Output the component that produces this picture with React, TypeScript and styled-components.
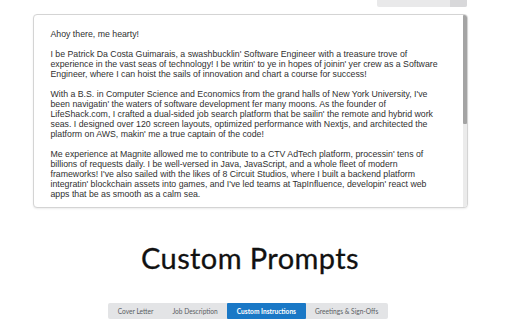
import styled, { createGlobalStyle } from "styled-components";
import { Clipboard } from "lucide-react";
import { useEffect, useRef, useState } from "react";

const GlobalStyle = createGlobalStyle`
    html, body {
        margin: 0;
        padding: 0;
        background: #ffffff;
        overflow: hidden;
    }
    body {
        font-family: "Liberation Sans", Arial, sans-serif;
    }
`;

const Page = styled.div`
    width: 500px;
    display: flex;
    flex-direction: column;
    align-items: center;
    margin-top: -16px;
`;

const ButtonRow = styled.div`
    width: 435px;
    display: flex;
    justify-content: flex-end;
`;

const CopyButton = styled.button`
    display: flex;
    align-items: stretch;
    height: 23px;
    padding: 0;
    border: none;
    border-radius: 0 0 2px 2px;
    overflow: hidden;
    background: #e9e9ea;
    margin-right: 1px;
    cursor: pointer;
`;

const CopyLabel = styled.span`
    display: flex;
    align-items: center;
    width: 73px;
    justify-content: center;
    font-family: "Liberation Sans", Arial, sans-serif;
    font-size: 7px;
    color: #555;
`;

const CopyIcon = styled.span`
    display: flex;
    align-items: center;
    justify-content: center;
    width: 17px;
    background: #d8d8da;
    color: #555;
`;

const LetterBox = styled.div`
    position: relative;
    box-sizing: border-box;
    width: 435px;
    height: 194px;
    margin-top: 7px;
    border: 1px solid #d4d4d4;
    border-radius: 4px;
    box-shadow: 0 1px 2px rgba(0, 0, 0, 0.08);
    background: #fff;
    overflow: hidden;
`;

const Letter = styled.textarea`
    display: block;
    box-sizing: border-box;
    width: 100%;
    height: 100%;
    margin: 0;
    padding: 14px 28px 15px 17px;
    border: none;
    font-family: "Liberation Sans", Arial, sans-serif;
    font-size: 8.75px;
    line-height: 10px;
    color: #303030;
    background: transparent;
    resize: none;
    outline: none;
    overflow-y: scroll;
    scrollbar-width: none;
`;

const Track = styled.div`
    position: absolute;
    top: 0;
    right: 0;
    bottom: 0;
    width: 4px;
    background: #ebebeb;
`;

const Thumb = styled.div`
    position: absolute;
    left: 0;
    width: 4px;
    background: #a4a4a4;
    border-radius: 1px;
`;

const Title = styled.h1`
    margin: 33px 0 0;
    font-family: Lato, "Noto Sans", sans-serif;
    font-weight: 400;
    font-size: 29px;
    line-height: 34px;
    color: #111;
    letter-spacing: 0.4px;
    -webkit-text-stroke: 0.3px #111;
`;

const Tabs = styled.div`
    display: flex;
    margin-top: 28px;
    background: #e3e4e6;
    border-radius: 2px;
    margin-left: -4px;
`;

const Tab = styled.button<{ $active?: boolean }>`
    height: 16px;
    padding: 0 9.5px;
    border: none;
    border-radius: 1px;
    font-family: Lato, "Noto Sans", sans-serif;
    font-size: 6.6px;
    font-weight: ${(p) => (p.$active ? 700 : 400)};
    color: ${(p) => (p.$active ? "#ffffff" : "#5a5e63")};
    background: ${(p) => (p.$active ? "#1a78c6" : "transparent")};
    cursor: pointer;
`;

const letter = `Ahoy there, me hearty!

I be Patrick Da Costa Guimarais, a swashbucklin' Software Engineer with a treasure trove of experience in the vast seas of technology! I be writin' to ye in hopes of joinin' yer crew as a Software Engineer, where I can hoist the sails of innovation and chart a course for success!

With a B.S. in Computer Science and Economics from the grand halls of New York University, I've been navigatin' the waters of software development fer many moons. As the founder of LifeShack.com, I crafted a dual-sided job search platform that be sailin' the remote and hybrid work seas. I designed over 120 screen layouts, optimized performance with Nextjs, and architected the platform on AWS, makin' me a true captain of the code!

Me experience at Magnite allowed me to contribute to a CTV AdTech platform, processin' tens of billions of requests daily. I be well-versed in Java, JavaScript, and a whole fleet of modern frameworks! I've also sailed with the likes of 8 Circuit Studios, where I built a backend platform integratin' blockchain assets into games, and I've led teams at TapInfluence, developin' react web apps that be as smooth as a calm sea.

I be a hearty team player, always ready to lend a hand on deck, and I never shy away from a stormy challenge. Whether it be squashin' bugs or plottin' new features, I bring the same spirit of adventure to every voyage.

Me mates say I be a quick learner with a keen eye fer detail, and I take pride in writin' clean, well-tested code that stands firm against the fiercest of tempests. I be comfortable workin' across the whole ship, from the frontend sails to the backend hull.

I'd be honored to join yer crew and help steer yer ship toward new horizons. Let's set sail together and discover the treasures that await!

Fair winds and followin' seas,
Patrick Da Costa Guimarais`;

const tabs = ["Cover Letter", "Job Description", "Custom Instructions", "Greetings & Sign-Offs"];

export default function App() {
    const [active, setActive] = useState("Custom Instructions");
    const [thumb, setThumb] = useState({ top: 0, height: 104 });
    const areaRef = useRef<HTMLTextAreaElement>(null);

    const measure = () => {
        const el = areaRef.current;
        if (!el || el.scrollHeight === 0) return;
        const ratio = el.clientHeight / el.scrollHeight;
        setThumb({
            top: (el.scrollTop / el.scrollHeight) * el.clientHeight,
            height: Math.min(1, ratio) * el.clientHeight,
        });
    };

    useEffect(() => {
        measure();
        const id = requestAnimationFrame(measure);
        return () => cancelAnimationFrame(id);
    }, []);

    return (
        <>
            <GlobalStyle />
            <Page>
                <ButtonRow>
                    <CopyButton>
                        <CopyLabel>Copy to clipboard</CopyLabel>
                        <CopyIcon>
                            <Clipboard size={9} strokeWidth={2} />
                        </CopyIcon>
                    </CopyButton>
                </ButtonRow>
                <LetterBox>
                    <Letter ref={areaRef} readOnly value={letter} onScroll={measure} />
                    <Track>
                        <Thumb style={{ top: thumb.top, height: thumb.height }} />
                    </Track>
                </LetterBox>
                <Title>Custom Prompts</Title>
                <Tabs>
                    {tabs.map((t) => (
                        <Tab key={t} $active={t === active} onClick={() => setActive(t)}>
                            {t}
                        </Tab>
                    ))}
                </Tabs>
            </Page>
        </>
    );
}
